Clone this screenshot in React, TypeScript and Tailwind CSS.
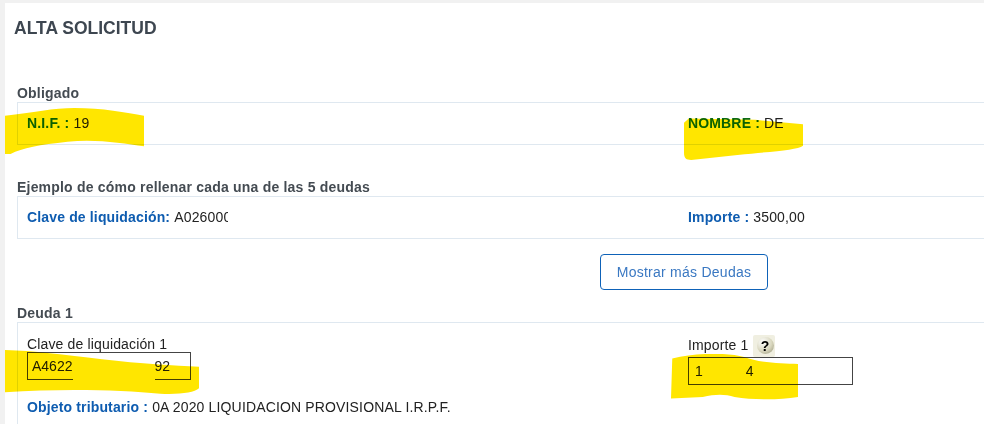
import type { ReactNode } from "react";

function Section({ title, children, className }: { title: string; children: ReactNode; className: string }) {
  return (
    <section>
      <h3 className="h-[19px] text-[14px] leading-[21px] font-bold tracking-[0.2px] text-[#444b52]">{title}</h3>
      <div className={`grid grid-cols-[661px_1fr] border border-r-0 border-[#dfe8f0] pl-[9px] ${className}`}>{children}</div>
    </section>
  );
}

function Field({ label, value, tone }: { label: string; value: ReactNode; tone: string }) {
  return (
    <p className="text-[14px] leading-[18px] tracking-[0.15px] text-[#222]">
      <b className={tone}>{label}</b> {value}
    </p>
  );
}

function Marker({ d, className }: { d: string; className: string }) {
  return (
    <svg className={`pointer-events-none absolute mix-blend-multiply ${className}`} viewBox="0 0 200 60" preserveAspectRatio="none">
      <path d={d} fill="#ffe600" />
    </svg>
  );
}

export default function App() {
  return (
    <div className="relative h-[424px] w-[984px] overflow-hidden bg-[#f1f1f1] pt-[3px] pl-[5px] font-['Liberation_Sans',Arial,sans-serif]">
      <main className="h-full bg-white pt-[15px] pl-[9px]">
        <h1 className="h-[21px] text-[17.5px] leading-[21px] font-bold text-[#3d4650]">ALTA SOLICITUD</h1>
        <div className="mt-[44px] ml-[3px]">
          <Section title="Obligado" className="h-[43px] pt-[11px]">
            <Field label="N.I.F. :" value="19" tone="text-[#0b6b12]" />
            <Field label="NOMBRE :" value="DE" tone="text-[#0b6b12]" />
          </Section>
          <div className="mt-[32px]">
            <Section title="Ejemplo de cómo rellenar cada una de las 5 deudas" className="h-[43px] pt-[11px]">
              <Field
                label="Clave de liquidación:"
                value={<span className="inline-block w-[54px] overflow-hidden align-bottom whitespace-nowrap">A026000</span>}
                tone="text-[#0e5cb0]"
              />
              <Field label="Importe :" value="3500,00" tone="text-[#0e5cb0]" />
            </Section>
          </div>
          <div className="mt-[15px] ml-[583px]">
            <button type="button" className="h-[36px] w-[168px] rounded-[4px] border border-[#0e62b8] bg-white text-[14px] tracking-[0.25px] text-[#3a78c2]">
              Mostrar más Deudas
            </button>
          </div>
          <div className="mt-[13px]">
            <Section title="Deuda 1" className="h-[110px] border-b-0 pt-[11px]">
              <div className="pt-px">
                <label className="block h-[17px] text-[14px] leading-[18px] tracking-[0.15px] text-[#222]">Clave de liquidación 1</label>
                <div className="flex h-[28px] w-[164px] items-center justify-between border border-[#444] pr-[20px] pl-[4px] text-[14px] text-[#222]">
                  <span>A4622</span>
                  <span>92</span>
                </div>
                <div className="mt-[18px]">
                  <Field label="Objeto tributario :" value="0A 2020 LIQUIDACION PROVISIONAL I.R.P.F." tone="text-[#0e5cb0]" />
                </div>
              </div>
              <div>
                <div className="flex h-[23px] items-center gap-[4px] text-[14px] tracking-[0.15px] text-[#222]">
                  <span>Importe 1</span>
                  <span className="flex h-[22px] w-[22px] items-center justify-end rounded-[2px] bg-[#f0efe1] pr-px">
                    <span className="flex h-[17px] w-[17px] items-center justify-center rounded-full bg-[radial-gradient(circle_at_35%_30%,#ffffff,#d8d6bd_55%,#8f8d72)] text-[14px] leading-none font-bold text-black">
                      ?
                    </span>
                  </span>
                </div>
                <div className="flex h-[28px] w-[165px] items-center gap-[43px] border border-[#444] pl-[6px] text-[14px] text-[#222]">
                  <span>1</span>
                  <span>4</span>
                </div>
              </div>
            </Section>
          </div>
        </div>
      </main>
      <Marker className="top-[108px] left-[5px] h-[46px] w-[139px]" d="M0 10 C40 6 70 0 100 0 C140 0 175 6 200 10 L200 50 C170 46 130 40 90 44 C50 48 25 52 8 60 L0 60 Z" />
      <Marker className="top-[117px] left-[684px] h-[43px] w-[119px]" d="M8 2 L120 4 L200 10 L200 40 C190 46 150 48 90 53 L12 60 C4 60 0 58 0 50 L0 8 Z" />
      <Marker className="top-[350px] left-[5px] h-[46px] w-[194px]" d="M0 0 C30 1 60 6 100 12 C140 18 175 20 200 22 L200 50 C195 56 180 58 160 57 C120 52 60 50 0 55 Z" />
      <Marker className="top-[354px] left-[671px] h-[46px] w-[127px]" d="M2 6 C40 -2 90 -2 115 4 C140 12 175 12 200 13 L200 56 C170 60 130 60 100 56 C85 52 70 52 50 56 L0 58 Z" />
      <div className="absolute top-[378px] left-[73px] h-[3px] w-[82px] bg-[#ffe600]" />
    </div>
  );
}
